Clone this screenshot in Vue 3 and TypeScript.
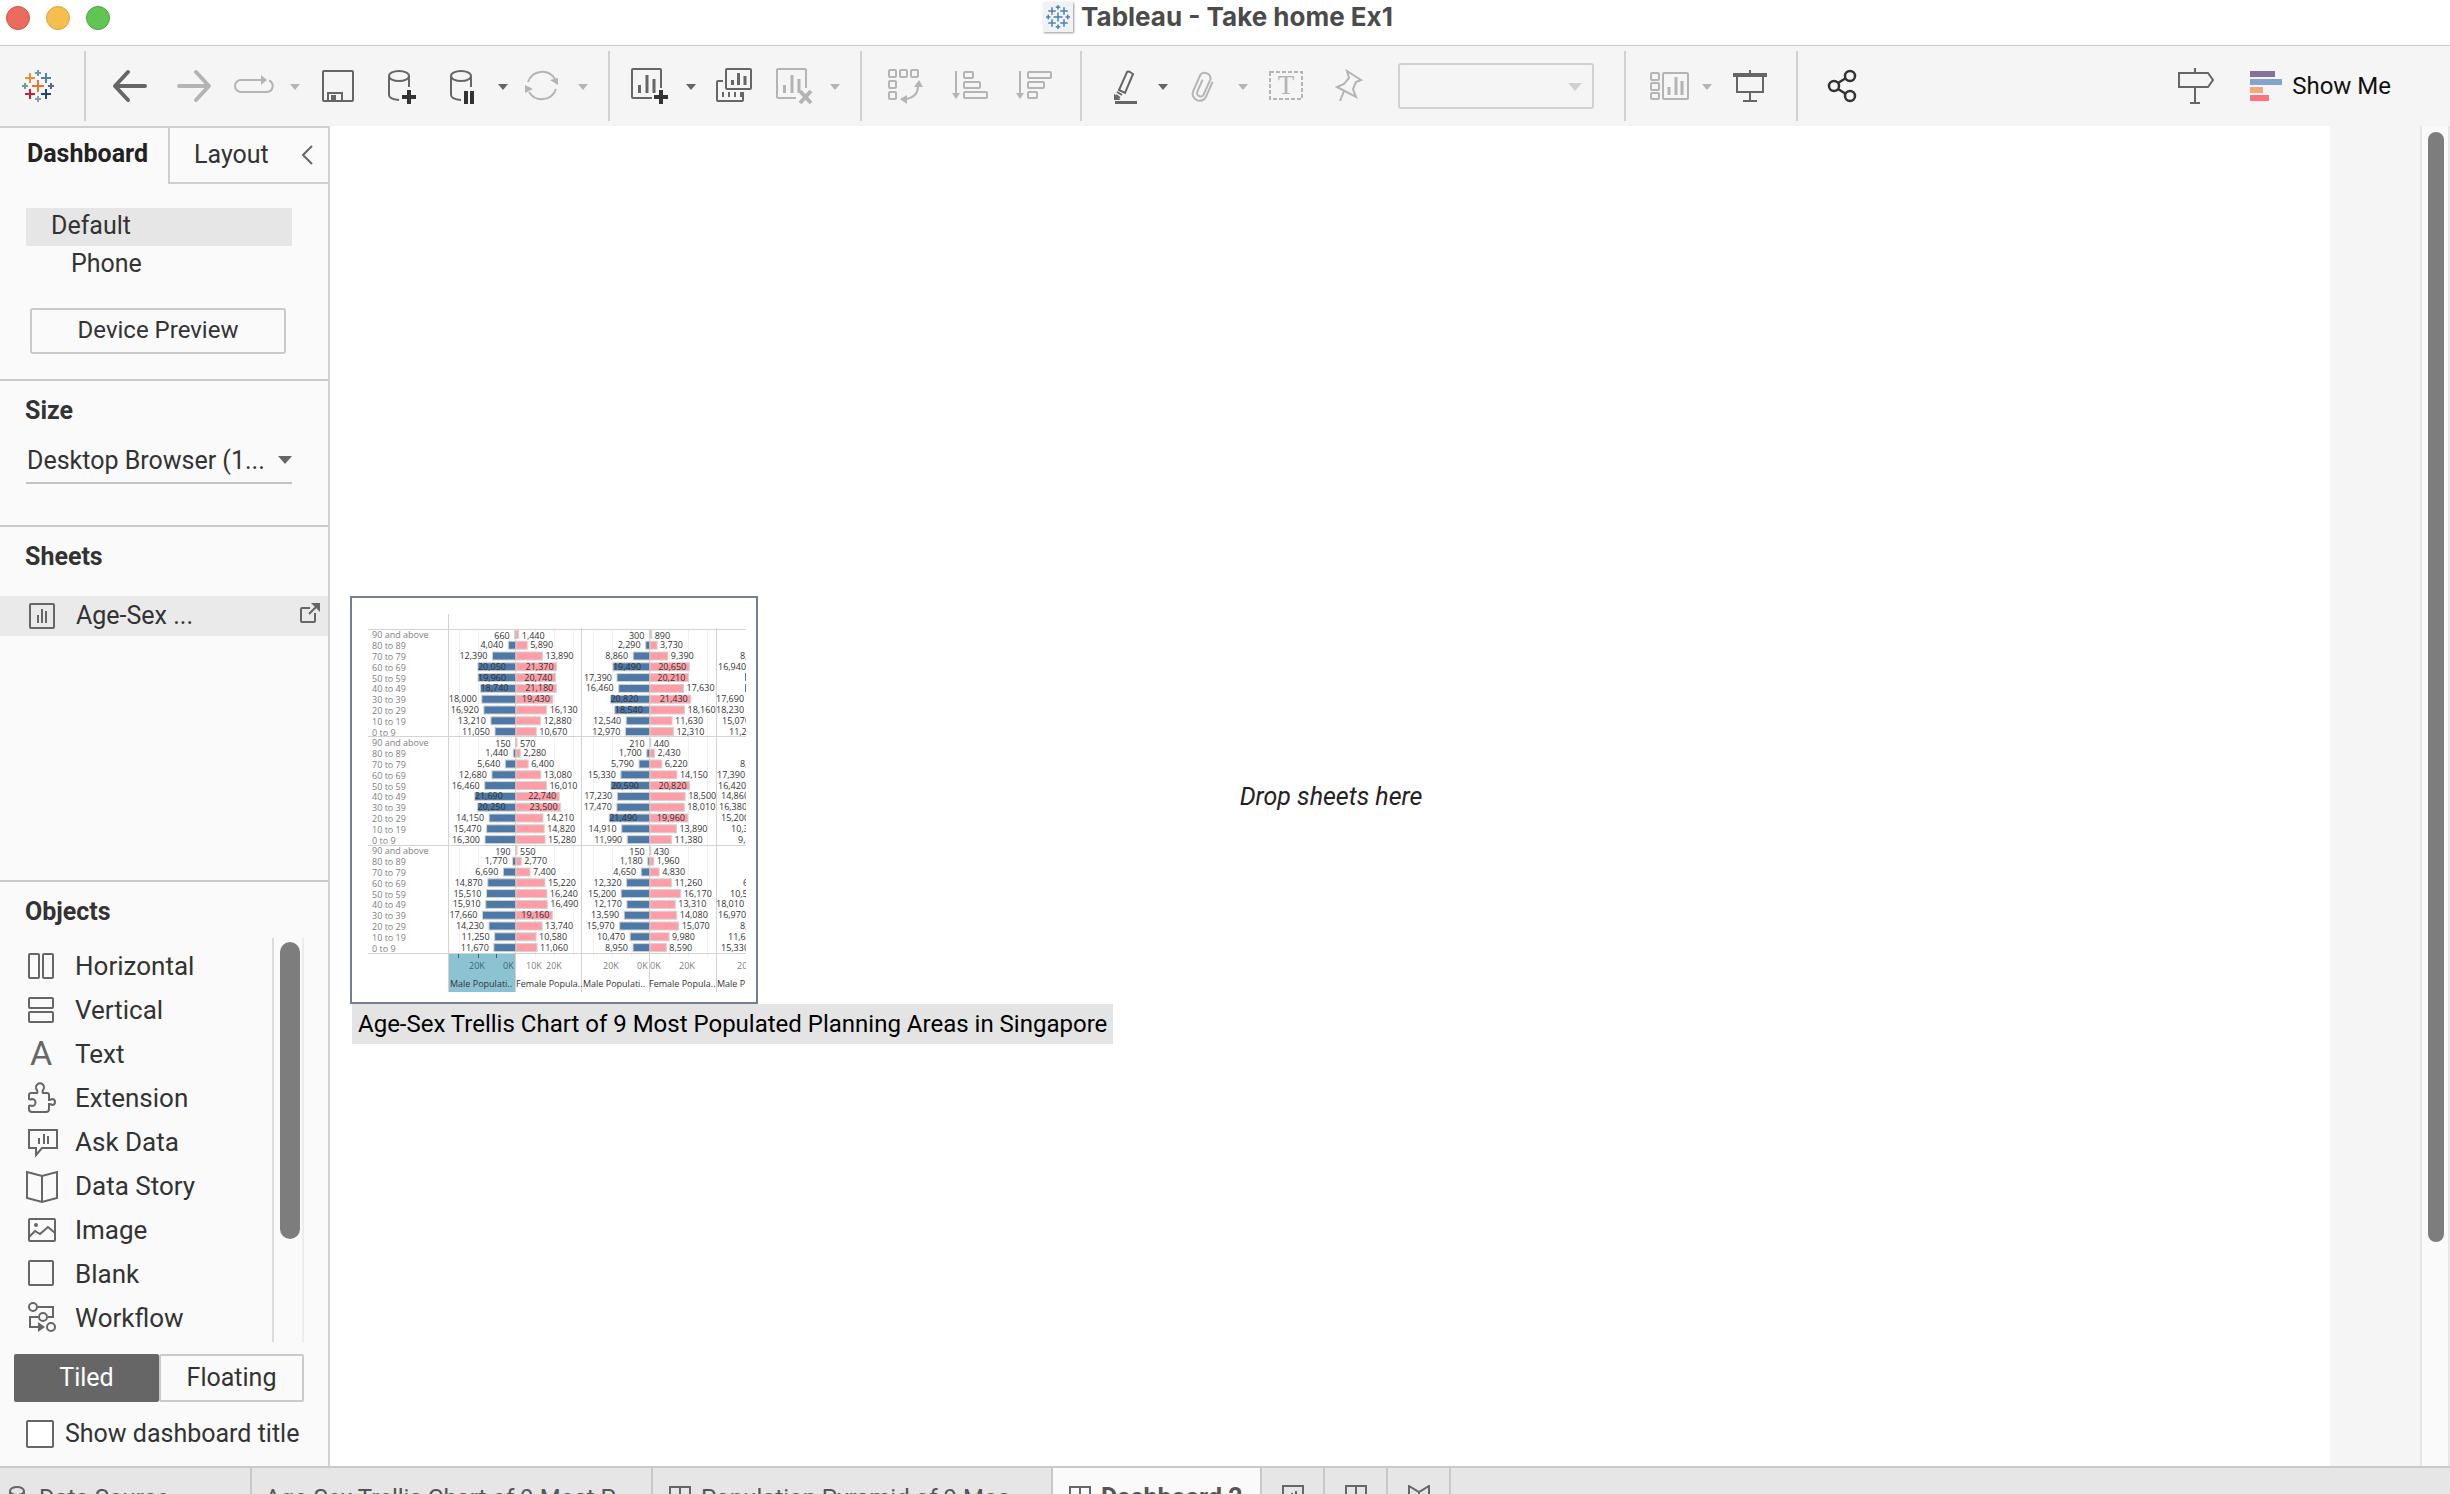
<script setup lang="ts">
import { ref } from 'vue'

interface Tool { name: string; icon: string; caret?: boolean; off?: boolean }
interface Panel { male: number[]; female: number[] }
interface Clipped { row: number; text: string; x: number }

const toolGroups: Tool[][] = [
  [
    { name: 'Undo', icon: 'back' },
    { name: 'Redo', icon: 'forward', off: true },
    { name: 'Replay', icon: 'replay', caret: true, off: true },
    { name: 'Save', icon: 'save' },
    { name: 'New data source', icon: 'dbAdd' },
    { name: 'Pause auto updates', icon: 'dbPause', caret: true },
    { name: 'Run update', icon: 'refresh', caret: true, off: true },
  ],
  [
    { name: 'New worksheet', icon: 'sheetAdd', caret: true },
    { name: 'Duplicate', icon: 'duplicate' },
    { name: 'Clear sheet', icon: 'sheetClear', caret: true, off: true },
  ],
  [
    { name: 'Swap rows and columns', icon: 'swap', off: true },
    { name: 'Sort ascending', icon: 'sortAsc', off: true },
    { name: 'Sort descending', icon: 'sortDesc', off: true },
  ],
  [
    { name: 'Highlight', icon: 'pen', caret: true },
    { name: 'Group members', icon: 'clip', caret: true, off: true },
    { name: 'Show mark labels', icon: 'label', off: true },
    { name: 'Fix axes', icon: 'pin', off: true },
  ],
  [
    { name: 'Show/hide cards', icon: 'cards', caret: true, off: true },
    { name: 'Presentation mode', icon: 'present' },
  ],
  [{ name: 'Share', icon: 'share' }],
]

const icons: Record<string, string> = {
  back: '<g stroke-width="4" stroke-linecap="round" stroke-linejoin="round"><path d="M35 20H5M18 6L5 20l13 14"/></g>',
  forward: '<g stroke-width="4" stroke-linecap="round" stroke-linejoin="round"><path d="M5 20h30M22 6l13 14-13 14"/></g>',
  replay: '<path d="M27 14H7a6 6 0 0 0 0 12h26a6 6 0 0 0 2-11.500"/><path d="M27 9l6 5-6 5z" fill="currentColor" stroke="none"/>',
  save: '<rect x="5" y="5" width="30" height="30" rx="1"/><path d="M10 35v-8h14v8"/><path d="M13 29h5v5h-5z" fill="currentColor" stroke="none"/>',
  dbAdd: '<ellipse cx="17" cy="10" rx="10" ry="5"/><path d="M7 10v19q0 4 10 5M27 10v11"/><path d="M27 24v14M20 31h14" stroke="#333" stroke-width="4"/>',
  dbPause: '<ellipse cx="19" cy="10" rx="10" ry="5"/><path d="M9 10v19q0 4 10 5M29 10v11"/><path d="M24 25v13M30 25v13" stroke="#333" stroke-width="4"/>',
  refresh: '<path d="M6 16a15 15 0 0 1 27-3M34 23a15 15 0 0 1-27 3"/><path d="M28 14l8-2v7zM3 19v8l8-4z" fill="currentColor" stroke="none"/>',
  sheetAdd: '<path d="M22 32H3a1 1 0 0 1-1-1V4a1 1 0 0 1 1-1h27a1 1 0 0 1 1 1v18"/><path d="M9.500 19v8M17 9v18M24 13v14" stroke-width="3"/><path d="M31 24v14M24 31h14" stroke="#333" stroke-width="4"/>',
  duplicate: '<rect x="12" y="3" width="25" height="20" rx="1"/><path d="M9 15H4a1 1 0 0 0-1 1v18a1 1 0 0 0 1 1h24a1 1 0 0 0 1-1v-8M9 26v5M15 26v5M21 26v5M27 26v5"/><path d="M18.500 14v5M24.500 7v12M31 10v9" stroke-width="3"/>',
  sheetClear: '<path d="M22 32H4a1 1 0 0 1-1-1V4a1 1 0 0 1 1-1h27a1 1 0 0 1 1 1v18"/><path d="M10.500 19v8M18 9v18M25 13v14" stroke-width="3"/><path d="M26 25l11 12M37 25l-11 12" stroke-width="4"/>',
  swap: '<rect x="3" y="4" width="7" height="7" rx="1"/><rect x="14" y="4" width="7" height="7" rx="1"/><rect x="25" y="4" width="7" height="7" rx="1"/><rect x="3" y="15" width="7" height="7" rx="1"/><rect x="3" y="26" width="7" height="7" rx="1"/><path d="M20 33q12-2 12-13"/><path d="M28 21l5-7 4 7zM21 29v9l-7-5z" fill="currentColor" stroke="none"/>',
  sortAsc: '<path d="M6 5v24"/><path d="M2 27h8l-4 6z" fill="currentColor" stroke="none"/><rect x="14" y="6" width="9" height="6" rx="1"/><rect x="14" y="16" width="16" height="6" rx="1"/><rect x="14" y="26" width="23" height="6" rx="1"/>',
  sortDesc: '<path d="M6 5v24"/><path d="M2 27h8l-4 6z" fill="currentColor" stroke="none"/><rect x="14" y="6" width="23" height="6" rx="1"/><rect x="14" y="16" width="16" height="6" rx="1"/><rect x="14" y="26" width="9" height="6" rx="1"/>',
  pen: '<path d="M25 6q1-1 3 0l3 2-8 19-6-3zM15 26l5 3M14 29l4 3"/><path d="M13 33v-3l3 3z" fill="currentColor"/><path d="M13 36.500h22" stroke-width="3"/>',
  clip: '<g transform="rotate(24 20 20)"><path d="M28 12v16a7 7 0 0 1-14 0V10a6 6 0 0 1 11 0v17a3 3 0 0 1-7 0V14"/></g>',
  label: '<rect x="4" y="6" width="32" height="27" stroke-dasharray="4 2"/>',
  pin: '<path d="M17 5l14 9-5 2-3 7 3 8-19-10 7-3 5-6zM14 25l-4 10"/>',
  cards: '<rect x="5" y="7" width="8" height="7" rx="1"/><rect x="5" y="17" width="8" height="7" rx="1"/><rect x="5" y="27" width="8" height="6" rx="1"/><rect x="17" y="7" width="25" height="26" rx="1"/><path d="M23 21v8M30 11v18M36 15v14" stroke-width="3"/>',
  present: '<path d="M3 9h34" stroke-width="4"/><path d="M20 4v4M7 10v16h26V10M20 26v9M13 35h14"/>',
  share: '<g stroke="#333" stroke-width="2.500"><circle cx="28" cy="10" r="5"/><circle cx="12" cy="20" r="5"/><circle cx="28" cy="30" r="5"/><path d="M16 17l8-5M16 23l8 5"/></g>',
  signpost: '<path d="M3 7h29l5 7-5 7H3zM19 2v5M19 21v15M14 37h10"/>',
  horizontal: '<rect x="3" y="8" width="10" height="24" rx="1"/><rect x="17" y="8" width="10" height="24" rx="1"/>',
  vertical: '<rect x="3" y="8" width="24" height="10" rx="1"/><rect x="3" y="22" width="24" height="10" rx="1"/>',
  extension: '<path d="M3 17q0-2 2-2h6q1-1 0-3a4 4 0 1 1 6 0q-1 2 0 3h4q2 0 2 2v5q2 0 3-1a3 3 0 1 1 0 6q-1-1-3-1v5q0 3-3 3H6q-3 0-3-3v-3q1-1 3 0a3 3 0 1 0 0-7q-2 1-3 0z"/>',
  ask: '<path d="M3 8h28v18H16l-6 7v-7H3zM13 16v6M18 12v10M22 14v8"/>',
  story: '<path d="M1 6l15 4 15-4v26l-15 4-15-4zM16 10v26"/>',
  image: '<rect x="3" y="9" width="26" height="22" rx="1"/><circle cx="10" cy="15" r="2" fill="currentColor" stroke="none"/><path d="M3 27l6-6 5 3 8-7 7 6"/>',
  blank: '<rect x="3" y="7" width="24" height="24" rx="1"/>',
  workflow: '<circle cx="7" cy="9" r="4"/><circle cx="17" cy="19" r="4"/><circle cx="25" cy="29" r="4"/><path d="M12 9h15v10h-5M12 19H4v10h8"/><path d="M12 24v10l7-5z" fill="currentColor" stroke="none"/>',
  text: '',
}

const objects = [
  { label: 'Horizontal', icon: 'horizontal' },
  { label: 'Vertical', icon: 'vertical' },
  { label: 'Text', icon: 'text' },
  { label: 'Extension', icon: 'extension' },
  { label: 'Ask Data', icon: 'ask' },
  { label: 'Data Story', icon: 'story' },
  { label: 'Image', icon: 'image' },
  { label: 'Blank', icon: 'blank' },
  { label: 'Workflow', icon: 'workflow' },
]

const logoMarks = [
  { x: 20, y: 20, r: 6, c: '#e8762d' },
  { x: 12, y: 12, r: 5, c: '#eb912c' },
  { x: 28, y: 12, r: 5, c: '#4f8799' },
  { x: 12, y: 28, r: 5, c: '#c72035' },
  { x: 28, y: 28, r: 5, c: '#1f447e' },
  { x: 20, y: 7, r: 3, c: '#7099a6' },
  { x: 20, y: 33, r: 3, c: '#8f9bbd' },
  { x: 7, y: 20, r: 3, c: '#7099a6' },
  { x: 33, y: 20, r: 3, c: '#5b6591' },
]

const ages = ['90 and above', '80 to 89', '70 to 79', '60 to 69', '50 to 59', '40 to 49', '30 to 39', '20 to 29', '10 to 19', '0 to 9']

const trellis: Panel[][] = [
  [
    {
      male: [660, 4040, 12390, 20050, 19960, 18740, 18000, 16920, 13210, 11050],
      female: [1440, 5890, 13890, 21370, 20740, 21180, 19430, 16130, 12880, 10670],
    },
    {
      male: [300, 2290, 8860, 19490, 17390, 16460, 20820, 18540, 12540, 12970],
      female: [890, 3730, 9390, 20650, 20210, 17630, 21430, 18160, 11630, 12310],
    },
  ],
  [
    {
      male: [150, 1440, 5640, 12680, 16460, 21690, 20250, 14150, 15470, 16300],
      female: [570, 2280, 6400, 13080, 16010, 22740, 23500, 14210, 14820, 15280],
    },
    {
      male: [210, 1700, 5790, 15330, 20590, 17230, 17470, 21490, 14910, 11990],
      female: [440, 2430, 6220, 14150, 20820, 18500, 18010, 19960, 13890, 11380],
    },
  ],
  [
    {
      male: [190, 1770, 6690, 14870, 15510, 15910, 17660, 14230, 11250, 11670],
      female: [550, 2770, 7400, 15220, 16240, 16490, 19160, 13740, 10580, 11060],
    },
    {
      male: [150, 1180, 4650, 12320, 15200, 12170, 13590, 15970, 10470, 8950],
      female: [430, 1960, 4830, 11260, 16170, 13310, 14080, 15070, 9980, 8590],
    },
  ],
]

const clipped: Clipped[][] = [
  [
    { row: 2, text: '8,', x: 388 }, { row: 3, text: '16,940', x: 366 }, { row: 6, text: '17,690', x: 364 },
    { row: 7, text: '18,230', x: 364 }, { row: 8, text: '15,070', x: 370 }, { row: 9, text: '11,2', x: 377 },
  ],
  [
    { row: 2, text: '8,', x: 388 }, { row: 3, text: '17,390', x: 365 }, { row: 4, text: '16,420', x: 366 },
    { row: 5, text: '14,860', x: 369 }, { row: 6, text: '16,380', x: 367 }, { row: 7, text: '15,200', x: 369 },
    { row: 8, text: '10,3', x: 379 }, { row: 9, text: '9,4', x: 386 },
  ],
  [
    { row: 3, text: '6', x: 391 }, { row: 4, text: '10,5', x: 378 }, { row: 5, text: '18,010', x: 364 },
    { row: 6, text: '16,970', x: 366 }, { row: 7, text: '8,', x: 388 }, { row: 8, text: '11,6', x: 376 },
    { row: 9, text: '15,330', x: 369 },
  ],
]

const perPerson = 0.0019
const rowPitch = 10.8
const zero = [164, 298]
const groupTop = [31, 139, 247]
const insideFrom = 18510

const bar = (v: number) => v * perPerson
const fmt = (v: number) => v.toLocaleString('en-US')
const rowMid = (g: number, r: number) => groupTop[g] + rowPitch * (r + 0.5)

interface Mark { x: number; y: number; w: number; fill: string; text: string; ty: number; tx: number; anchor: 'start' | 'end' }
const marks: Mark[] = []
trellis.forEach((panels, g) =>
  panels.forEach((p, c) => {
    ages.forEach((_, r) => {
      const m = p.male[r]
      const f = p.female[r]
      const y = rowMid(g, r)
      const ty = r === 0 ? y + 5 : y + 3
      const left = zero[c] - bar(m)
      const right = zero[c] + bar(f)
      marks.push({ x: left, y, w: bar(m), fill: '#4e79a7', text: fmt(m), ty, tx: m > insideFrom ? left : left - 5, anchor: m > insideFrom ? 'start' : 'end' })
      marks.push({ x: zero[c], y, w: bar(f), fill: '#ff9da7', text: fmt(f), ty, tx: f > insideFrom ? right - 3 : right + 3, anchor: f > insideFrom ? 'end' : 'start' })
    })
  }),
)

const axisLabels = [
  { t: '20K', x: 117, dark: true }, { t: '0K', x: 151, dark: true }, { t: '10K', x: 174 }, { t: '20K', x: 194 },
  { t: '20K', x: 251 }, { t: '0K', x: 285 }, { t: '0K', x: 298 }, { t: '20K', x: 327 }, { t: '20', x: 385 },
]
const axisTitles = [
  { t: 'Male Populati..', x: 98 }, { t: 'Female Popula..', x: 164 }, { t: 'Male Populati..', x: 231 },
  { t: 'Female Popula..', x: 297 }, { t: 'Male P', x: 365 },
]

const mode = ref<'Tiled' | 'Floating'>('Tiled')
const showTitle = ref(false)
</script>

<template>
  <div class="app">
    <header class="titlebar">
      <div class="lights"><i class="red"></i><i class="amber"></i><i class="green"></i></div>
      <svg class="doc" viewBox="0 0 40 40" aria-hidden="true">
        <rect x="0" y="0" width="40" height="40" fill="#f0f2f4" />
        <path v-for="(m, i) in logoMarks" :key="i" :d="`M${m.x - m.r} ${m.y}h${2 * m.r}M${m.x} ${m.y - m.r}v${2 * m.r}`" stroke="#4a83b5" stroke-width="2" />
      </svg>
      <h1>Tableau - Take home Ex1</h1>
    </header>

    <nav class="toolbar" aria-label="Toolbar">
      <button class="logo" aria-label="Start page">
        <svg viewBox="0 0 40 40">
          <path v-for="(m, i) in logoMarks" :key="i" :d="`M${m.x - m.r} ${m.y}h${2 * m.r}M${m.x} ${m.y - m.r}v${2 * m.r}`" :stroke="m.c" stroke-width="2" />
        </svg>
      </button>
      <div v-for="(group, gi) in toolGroups" :key="gi" class="group">
        <button v-for="tool in group" :key="tool.name" class="tool" :class="{ split: tool.caret, off: tool.off }" :aria-label="tool.name">
          <svg v-if="tool.icon === 'label'" class="icon" viewBox="0 0 40 40">
            <rect x="4" y="6" width="32" height="27" stroke-dasharray="4 2" />
            <text x="20" y="28" text-anchor="middle" class="serif">T</text>
          </svg>
          <svg v-else class="icon" viewBox="0 0 40 40" v-html="icons[tool.icon]"></svg>
          <svg v-if="tool.caret" class="caret" viewBox="0 0 12 8"><path d="M1 1h10L6 7z" /></svg>
        </button>
        <div v-if="gi === 3" class="fit">
          <select aria-label="Fit" disabled></select>
          <svg class="fit-caret" viewBox="0 0 14 8"><path d="M0 0h14L7 8z" /></svg>
        </div>
      </div>
      <div class="right">
        <button class="tool" aria-label="Guide"><svg class="icon" viewBox="0 0 40 40" v-html="icons.signpost"></svg></button>
        <button class="showme">
          <span class="bars"><i></i><i></i><i></i><i></i></span>
          <span>Show Me</span>
        </button>
      </div>
    </nav>

    <div class="body">
      <aside class="side">
        <div class="tabs">
          <button class="tab active">Dashboard</button>
          <div class="tab2">
            <button class="tab">Layout</button>
            <button class="collapse" aria-label="Collapse pane">
              <svg viewBox="0 0 12 20"><path d="M11 1L2 10l9 9" /></svg>
            </button>
          </div>
        </div>
        <section class="devices">
          <ul>
            <li class="sel">Default</li>
            <li class="sub">Phone</li>
          </ul>
          <button class="preview">Device Preview</button>
        </section>
        <section class="size">
          <h2><label for="size">Size</label></h2>
          <div class="dropdown">
            <select id="size"><option>Desktop Browser (1...</option></select>
            <svg viewBox="0 0 14 8"><path d="M0 0h14L7 8z" /></svg>
          </div>
        </section>
        <section class="sheets">
          <h2>Sheets</h2>
          <a href="#" class="sheet">
            <svg class="sicon" viewBox="0 0 26 26"><rect x="1" y="1" width="24" height="24" rx="1" /><path d="M9 12v8M13 6v14M17 8v12" /></svg>
            <span>Age-Sex ...</span>
            <svg class="ext" viewBox="0 0 20 20"><path d="M10 5H2a1 1 0 0 0-1 1v12a1 1 0 0 0 1 1h12a1 1 0 0 0 1-1v-8M9 11l7-7" /><path d="M11 0h9v9z" class="solid" /></svg>
          </a>
        </section>
        <section class="objects">
          <h2>Objects</h2>
          <div class="scroller">
            <ul>
              <li v-for="o in objects" :key="o.label">
                <svg v-if="o.icon === 'text'" class="icon" viewBox="0 0 40 40"><text x="15" y="31" text-anchor="middle" class="sans">A</text></svg>
                <svg v-else class="icon" viewBox="0 0 40 40" v-html="icons[o.icon]"></svg>
                <span>{{ o.label }}</span>
              </li>
            </ul>
            <div class="track"><div class="thumb"></div></div>
          </div>
          <div class="modes">
            <button :class="{ on: mode === 'Tiled' }" @click="mode = 'Tiled'">Tiled</button>
            <button :class="{ on: mode === 'Floating' }" @click="mode = 'Floating'">Floating</button>
          </div>
          <label class="check"><input v-model="showTitle" type="checkbox" /><span>Show dashboard title</span></label>
        </section>
      </aside>

      <main class="stage">
        <div class="canvas">
          <p class="drop">Drop sheets here</p>
          <figure class="drag">
            <svg viewBox="0 0 404 404" class="chart" role="img" aria-label="Trellis chart preview">
              <defs><clipPath id="edge"><rect x="0" y="0" width="394" height="404" /></clipPath></defs>
              <g clip-path="url(#edge)">
                <g stroke="#f1f1f1">
                  <template v-for="z in zero" :key="z">
                    <path v-for="k in [-57, -38, -19, 19, 38, 57]" :key="k" :d="`M${z + k + 0.5} 31V359`" />
                  </template>
                </g>
                <rect x="97" y="356" width="67" height="38" fill="#8cc3d3" />
                <g stroke="#d3d3d3">
                  <path d="M96.500 16V394M229.500 30V394M364.500 30V394M163.500 31V394M297.500 31V394" />
                  <path d="M16 31.500H394M16 138.500H394M16 247.500H394M16 355.500H394" />
                </g>
                <path d="M106.500 356v4M126.500 356v4M144.500 356v4" stroke="#41616b" />
                <rect v-for="(m, i) in marks" :key="'b' + i" :x="m.x" :y="m.y - 4" :width="m.w" height="8" :fill="m.fill" stroke="#d3d3d3" stroke-width="1" />
                <rect x="393" y="75" width="4" height="8" fill="#4e79a7" />
                <rect x="393" y="86" width="4" height="8" fill="#4e79a7" />
                <g class="num">
                  <text v-for="(m, i) in marks" :key="'t' + i" :x="m.tx" :y="m.ty" :text-anchor="m.anchor">{{ m.text }}</text>
                  <template v-for="(list, g) in clipped" :key="g">
                    <text v-for="c in list" :key="c.row" :x="c.x" :y="rowMid(g, c.row) + 3">{{ c.text }}</text>
                  </template>
                </g>
                <g class="age">
                  <template v-for="(_, g) in groupTop" :key="g">
                    <text v-for="(a, r) in ages" :key="a" x="20" :y="rowMid(g, r) + 4">{{ a }}</text>
                  </template>
                  <text v-for="(a, i) in axisLabels" :key="'x' + i" :x="a.x" y="371" :class="{ dark: a.dark }">{{ a.t }}</text>
                </g>
                <g class="axis">
                  <text v-for="(a, i) in axisTitles" :key="i" :x="a.x" y="389">{{ a.t }}</text>
                </g>
              </g>
            </svg>
            <figcaption>Age-Sex Trellis Chart of 9 Most Populated Planning Areas in Singapore</figcaption>
          </figure>
        </div>
        <div class="vscroll"><div class="vthumb"></div></div>
      </main>
    </div>

    <footer class="sheetbar">
      <button class="stab source">
        <svg viewBox="0 0 22 26"><ellipse cx="10" cy="6" rx="7" ry="4" /><path d="M3 6v12q0 4 7 4t7-4V6" /></svg>Data Source
      </button>
      <button class="stab trellis">Age-Sex Trellis Chart of 9 Most P...</button>
      <button class="stab pyramid"><svg viewBox="0 0 22 26"><path d="M1 2h20v20H1zM11 2v20M11 12h10" /></svg>Population Pyramid of 9 Mos...</button>
      <button class="stab current"><svg viewBox="0 0 22 26"><path d="M1 2h20v20H1zM11 2v20M11 12h10" /></svg>Dashboard 2</button>
      <button class="stab add" aria-label="New worksheet"><svg viewBox="0 0 22 26"><path d="M1 1h20v22H1zM10 8v10M14 6v12" /></svg></button>
      <button class="stab add" aria-label="New dashboard"><svg viewBox="0 0 22 26"><path d="M1 1h20v22H1zM11 1v22M11 12h10" /></svg></button>
      <button class="stab add" aria-label="New story"><svg viewBox="0 0 22 26"><path d="M1 1l10 6 10-6v20l-10 4-10-4zM11 7v18" /></svg></button>
    </footer>
  </div>
</template>

<style>
html, body { margin: 0; overflow: hidden; background: #fff; }
</style>

<style scoped>
.app { display: flex; flex-direction: column; height: 100vh; overflow: hidden; font-family: Roboto, "Liberation Sans", sans-serif; font-size: 25px; line-height: 32px; color: #333; }
button, select, input { font: inherit; color: inherit; margin: 0; }
button { padding: 0; border: 0; background: none; }
ul { list-style: none; margin: 0; padding: 0; }
h1, h2, p, figure { margin: 0; }
svg { display: block; flex: none; fill: none; }

.titlebar { position: relative; display: flex; align-items: center; justify-content: center; gap: 8px; flex: none; height: 46px; box-sizing: border-box; padding: 0 14px 12px 0; border-bottom: 1px solid #cbcbcb; background: #fff; }
.lights { position: absolute; left: 6px; top: 6px; display: flex; gap: 16px; }
.lights i { width: 24px; height: 24px; border-radius: 50%; box-sizing: border-box; }
.red { background: #ed6a5e; border: 1px solid #d55548; }
.amber { background: #f5bf4f; border: 1px solid #dca23a; }
.green { background: #61c554; border: 1px solid #4ca73f; }
.doc { width: 30px; height: 30px; box-shadow: 1px 1px 2px #999; }
h1 { font-family: Inter, sans-serif; font-size: 26px; font-weight: 700; color: #4b4b4b; }

.toolbar { display: flex; align-items: center; flex: none; height: 80px; background: #f5f5f5; }
.logo { width: 40px; height: 40px; margin-left: 18px; margin-right: 26px; }
.group { display: flex; align-items: center; height: 70px; padding: 0 14px 0 12px; border-left: 2px solid #d1d1d1; }
.tool { display: flex; align-items: center; justify-content: center; width: 64px; height: 64px; color: #666; }
.tool.split { justify-content: flex-start; gap: 15px; width: 80px; padding-left: 8px; }
.tool.off { color: #b4b4b4; }
.icon { width: 40px; height: 40px; overflow: visible; stroke: currentColor; stroke-width: 2; }
.caret { width: 12px; height: 8px; fill: currentColor; margin-top: 2px; }
.serif { font: 27px "Liberation Serif", serif; fill: currentColor; stroke: none; }
.sans { font: 400 34px Roboto, sans-serif; fill: currentColor; stroke: none; }
.fit { position: relative; margin: 0 16px; }
.fit select { display: block; width: 196px; height: 46px; border: 2px solid #d1d1d1; border-radius: 3px; background: #f5f5f5; appearance: none; opacity: 1; }
.fit-caret { position: absolute; right: 12px; top: 20px; width: 14px; height: 8px; fill: #d1d1d1; }
.right { display: flex; align-items: center; margin-left: auto; gap: 22px; padding-right: 59px; }
.showme { display: flex; align-items: center; gap: 10px; color: #111; font-size: 24px; }
.bars { display: flex; flex-direction: column; gap: 2px; width: 32px; }
.bars i { height: 6px; }
.bars i:nth-child(1) { width: 25px; background: #85719a; }
.bars i:nth-child(2) { width: 32px; background: #83a5cb; }
.bars i:nth-child(3) { width: 13px; background: #f3a77e; }
.bars i:nth-child(4) { width: 19px; background: #fa7480; }

.body { display: flex; flex: 1; min-height: 0; }
.side { display: flex; flex-direction: column; flex: none; width: 330px; box-sizing: border-box; border-top: 2px solid #cfcfcf; border-right: 2px solid #d1d1d1; background: #fafafa; }
.side section { border-bottom: 2px solid #cacaca; }
.side h2 { padding: 14px 25px 0; font-size: 25px; font-weight: 700; }
.tabs { display: flex; height: 56px; }
.tab.active { width: 168px; padding-left: 7px; font-weight: 700; color: #222; }
.tabs .tab.active { padding-bottom: 4px; }
.tab2 { display: flex; align-items: center; flex: 1; justify-content: space-between; padding: 0 15px 0 24px; border-left: 2px solid #cfcfcf; border-bottom: 2px solid #cfcfcf; }
.collapse svg { width: 12px; height: 20px; stroke: #666; stroke-width: 2; }
.devices { padding: 24px 36px 25px 26px; }
.devices li { height: 38px; line-height: 36px; padding-left: 25px; }
.devices .sub { padding-left: 45px; }
.sel { background: #e6e6e6; }
.preview { display: block; width: 256px; height: 46px; margin: 24px 0 0 4px; padding: 0 0 2px 0; border: 2px solid #cacaca; border-radius: 3px; font-size: 24px; }
.size { padding-bottom: 41px; }
.dropdown { position: relative; margin: 11px 36px 0 26px; border-bottom: 2px solid #c4c4c4; }
.dropdown select { display: block; width: 100%; height: 44px; padding: 1px 0 0 1px; border: 0; background: none; appearance: none; }
.dropdown svg { position: absolute; right: 0; top: 18px; width: 14px; height: 8px; fill: #666; }
.side .sheets { flex: 1; }
.sheet { display: flex; align-items: center; height: 40px; margin-top: 23px; padding: 0 8px 0 29px; background: #eaeaea; color: inherit; text-decoration: none; }
.sheet span { flex: 1; padding-left: 21px; }
.sicon { width: 26px; height: 26px; stroke: #666; stroke-width: 2; }
.ext { width: 20px; height: 20px; stroke: #666; stroke-width: 2; margin-bottom: 6px; }
.solid { fill: #666; stroke: none; }
.side .objects { border: 0; padding-bottom: 18px; }
.scroller { display: flex; height: 404px; margin: 10px 24px 0 26px; }
.scroller ul { flex: 1; padding-top: 6px; }
.scroller li { display: flex; align-items: center; gap: 9px; height: 44px; font-size: 26px; }
.scroller .icon { color: #666; }
.track { width: 28px; border-left: 2px solid #dcdcdc; border-right: 2px solid #ececec; }
.thumb { width: 20px; height: 297px; margin: 4px 0 0 6px; border-radius: 10px; background: #7d7d7d; }
.modes { display: flex; height: 48px; margin: 12px 24px 0 14px; }
.modes button { flex: 1; box-sizing: border-box; border: 2px solid #cacaca; border-radius: 2px; }
.modes .on { background: #666; border-color: #666; color: #fff; }
.check { display: flex; align-items: center; gap: 11px; height: 28px; margin: 18px 0 0 26px; }
.check input { appearance: none; width: 28px; height: 28px; border: 2px solid #666; border-radius: 2px; background: #fff; }

.stage { display: flex; flex: 1; min-width: 0; background: #f5f5f5; }
.canvas { position: relative; display: flex; align-items: center; justify-content: center; flex: 1; background: #fff; }
.drop { padding: 2px 0 0 2px; font-style: italic; color: #222; }
.drag { position: absolute; left: 20px; top: 470px; }
.chart { width: 404px; height: 404px; border: 2px solid #70808f; background: #fff; }
figcaption { height: 40px; line-height: 40px; margin-left: 2px; padding: 0 6px; background: #e4e4e4; color: #000; font-size: 24px; white-space: nowrap; }
.num { font: 9px "Open Sans", sans-serif; fill: #333; }
.age { font: 9px "Open Sans", sans-serif; fill: #808080; }
.age .dark { fill: #3f6670; }
.axis { font: 500 9px "Open Sans", sans-serif; fill: #333; }
.vscroll { width: 26px; margin-left: 90px; border-left: 2px solid #e6e6e6; border-right: 2px solid #e6e6e6; background: #fafafa; }
.vthumb { width: 16px; height: 1110px; margin: 6px 0 0 6px; border-radius: 8px; background: #7d7d7d; }

.sheetbar { display: flex; flex: none; height: 28px; overflow: hidden; border-top: 2px solid #cacaca; background: #e6e6e6; box-sizing: border-box; }
.stab { display: flex; align-items: center; gap: 10px; flex: none; box-sizing: border-box; height: 60px; border-right: 2px solid #c8c8c8; color: #555; font-size: 24px; white-space: nowrap; }
.stab svg { width: 22px; height: 26px; stroke: #666; stroke-width: 2; }
.source { width: 252px; padding-left: 7px; }
.trellis { width: 401px; padding-left: 13px; }
.pyramid { width: 400px; padding-left: 16px; }
.current { width: 209px; padding-left: 16px; background: #fafafa; font-size: 25px; font-weight: 700; }
.add { width: 63px; justify-content: center; }
</style>
